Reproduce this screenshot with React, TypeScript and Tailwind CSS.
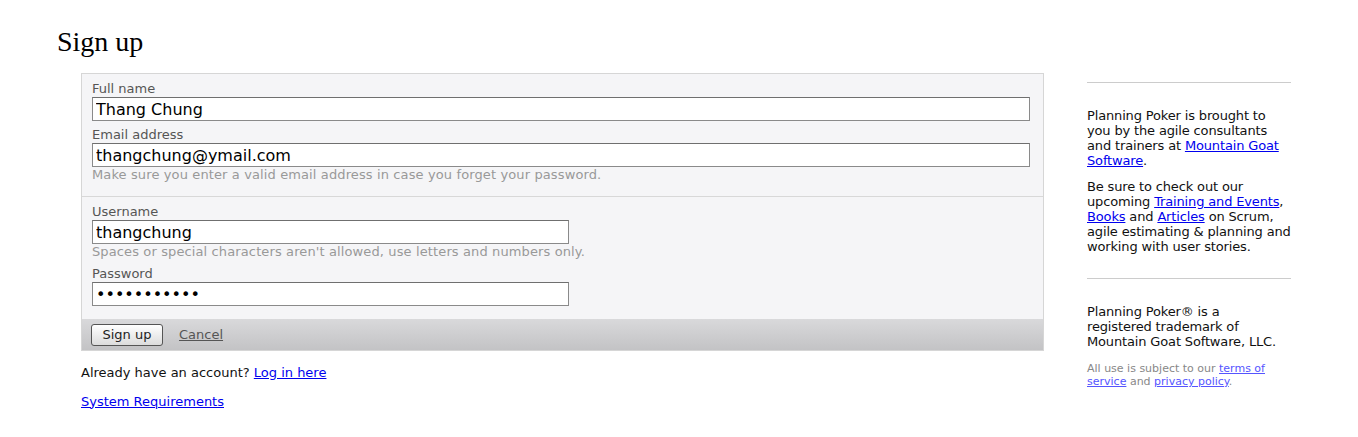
import React from 'react';

const sans = "font-['Verdana','DejaVu_Sans',sans-serif]";

function Field({ label, value, type = 'text', wide = true, hint }: { label: string; value: string; type?: string; wide?: boolean; hint?: string }) {
  return (
    <div className="mb-[6px]">
      <label className="block text-[13px] leading-[16px] text-[#555]">{label}</label>
      <input
        type={type}
        defaultValue={value}
        className={`${wide ? 'w-[938px]' : 'w-[477px]'} h-[24px] bg-white border border-[#8a8a8a] border-t-[#6f6f6f] px-[3px] text-[16px] leading-[20px] text-black outline-none ${sans}`}
      />
      {hint && <p className="text-[13px] leading-[16px] tracking-[0.12px] text-[#999]">{hint}</p>}
    </div>
  );
}

export default function App() {
  return (
    <div className={`min-h-screen bg-white ${sans} text-[13px] text-[#111]`}>
      <div className="flex">
        {/* main column */}
        <div className="ml-[57px] w-[987px]">
          <h1 className="font-['Georgia','Liberation_Serif',serif] text-[28px] leading-[30px] pt-[27px] text-black">Sign up</h1>
          <div className="ml-[24px] mt-[16px] border border-[#d6d6d6] bg-[#f5f5f7]">
            <div className="px-[10px] pt-[7px] pb-[7px] border-b border-[#d8d8d8]">
              <Field label="Full name" value="Thang Chung" />
              <Field label="Email address" value="thangchung@ymail.com" hint="Make sure you enter a valid email address in case you forget your password." />
            </div>
            <div className="px-[10px] pt-[7px] pb-[7px]">
              <Field label="Username" value="thangchung" wide={false} hint="Spaces or special characters aren't allowed, use letters and numbers only." />
              <Field label="Password" value="thangchung1" type="password" wide={false} />
            </div>
            <div className="h-[31px] flex items-center gap-[16px] px-[9px] bg-gradient-to-b from-[#d9d9db] to-[#c3c3c5]">
              <button className="h-[22px] w-[72px] rounded-[3px] border border-[#555] bg-gradient-to-b from-white to-[#dcdcdc] text-[13px] text-[#222]">Sign up</button>
              <a href="#" className="text-[13px] text-[#555] underline">Cancel</a>
            </div>
          </div>
          <p className="ml-[24px] mt-[12px] text-[13px]">
            Already have an account? <a href="#" className="text-[#00e] underline">Log in here</a>
          </p>
          <p className="ml-[24px] mt-[9px] text-[13px]">
            <a href="#" className="text-[#00e] underline">System Requirements</a>
          </p>
        </div>

        {/* sidebar */}
        <div className="ml-[43px] w-[204px] pt-[82px] text-[13px] leading-[15px] tracking-[-0.15px]">
          <hr className="w-[204px] border-0 border-t border-[#ccc]" />
          <p className="mt-[25px]">
            Planning Poker is brought to you by the agile consultants and trainers at{' '}
            <a href="#" className="text-[#00e] underline">Mountain Goat Software</a>.
          </p>
          <p className="mt-[11px]">
            Be sure to check out our upcoming <a href="#" className="text-[#00e] underline">Training and Events</a>,{' '}
            <a href="#" className="text-[#00e] underline">Books</a> and{' '}
            <a href="#" className="text-[#00e] underline">Articles</a> on Scrum, agile estimating &amp; planning and working with user stories.
          </p>
          <hr className="w-[204px] mt-[24px] border-0 border-t border-[#ccc]" />
          <p className="mt-[25px] w-[192px]">Planning Poker® is a registered trademark of Mountain Goat Software, LLC.</p>
          <p className="mt-[13px] text-[11px] leading-[13px] tracking-normal text-[#888]">
            All use is subject to our <a href="#" className="text-[#55f] underline">terms of service</a> and{' '}
            <a href="#" className="text-[#55f] underline">privacy policy</a>.
          </p>
        </div>
      </div>
    </div>
  );
}
